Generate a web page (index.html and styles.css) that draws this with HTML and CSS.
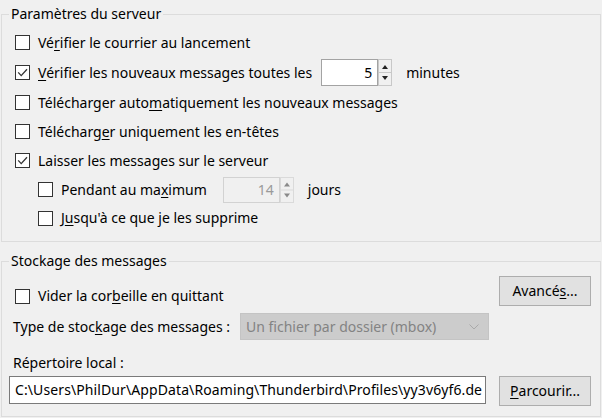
FILE: index.html
```html
<!DOCTYPE html>
<html lang="fr">
<head>
<meta charset="utf-8">
<title>Paramètres du serveur</title>
<link rel="stylesheet" href="styles.css">
</head>
<body>
<fieldset class="group group-server">
  <legend>Paramètres du serveur</legend>
  <div class="group-body">
    <div class="row">
      <span class="cb"></span>
      <span class="lbl">Vé<u>r</u>ifier le courrier au lancement</span>
    </div>
    <div class="row row-tall">
      <span class="cb"><svg viewBox="0 0 13 13" width="13" height="13"><path d="M2.2 6.4 L5.2 9.6 L11 3.2" /></svg></span>
      <span class="lbl"><u>V</u>érifier les nouveaux messages toutes les</span>
      <span class="spin spin-minutes">
        <span class="spin-field">5</span>
        <svg class="spin-btns" viewBox="0 0 14 27" width="14" height="27"><rect x="0.5" y="0.5" width="13" height="26" /><line x1="0" y1="13.5" x2="14" y2="13.5" /><polygon points="4,10 10,10 7,6" /><polygon points="4,17 10,17 7,21" /></svg>
      </span>
      <span class="unit">minutes</span>
    </div>
    <div class="row">
      <span class="cb"></span>
      <span class="lbl">Télécharger auto<u>m</u>atiquement les nouveaux messages</span>
    </div>
    <div class="row">
      <span class="cb"></span>
      <span class="lbl">Télécharg<u>e</u>r uniquement les en-têtes</span>
    </div>
    <div class="row">
      <span class="cb"><svg viewBox="0 0 13 13" width="13" height="13"><path d="M2.2 6.4 L5.2 9.6 L11 3.2" /></svg></span>
      <span class="lbl">Laisser les messages sur le serveur</span>
    </div>
    <div class="row row-sub">
      <span class="cb"></span>
      <span class="lbl">Pendant au ma<u>x</u>imum</span>
      <span class="spin spin-days disabled">
        <span class="spin-field">14</span>
        <svg class="spin-btns" viewBox="0 0 14 26" width="14" height="26"><rect x="0.5" y="0.5" width="13" height="25" /><line x1="0" y1="13" x2="14" y2="13" /><polygon points="4,9.5 10,9.5 7,5.5" /><polygon points="4,16.5 10,16.5 7,20.5" /></svg>
      </span>
      <span class="unit">jours</span>
    </div>
    <div class="row row-sub row-last">
      <span class="cb"></span>
      <span class="lbl">J<u>u</u>squ'à ce que je les supprime</span>
    </div>
  </div>
</fieldset>

<fieldset class="group group-storage">
  <legend>Stockage des messages</legend>
  <div class="group-body">
    <div class="line line-empty">
      <div class="row row-check">
        <span class="cb"></span>
        <span class="lbl">Vider la cor<u>b</u>eille en quittant</span>
      </div>
      <button class="btn" type="button">Avancé<u>s</u>...</button>
    </div>
    <div class="line line-type">
      <span class="text-lbl type-lbl">Type de stoc<u>k</u>age des messages :</span>
      <span class="select disabled">
        <span class="select-val">Un fichier par dossier (mbox)</span>
        <svg class="chevron" viewBox="0 0 10 6" width="10" height="6"><path d="M0.5 0.5 L5 5 L9.5 0.5" /></svg>
      </span>
    </div>
    <div class="line line-rep">
      <span class="text-lbl">Répertoire local :</span>
    </div>
    <div class="line line-path">
      <div class="path-field">C:\Users\PhilDur\AppData\Roaming\Thunderbird\Profiles\yy3v6yf6.de</div>
      <button class="btn" type="button"><u>P</u>arcourir...</button>
    </div>
  </div>
</fieldset>
</body>
</html>
```

FILE: styles.css
```css
html, body {
  margin: 0;
  padding: 0;
}

body {
  width: 602px;
  height: 418px;
  overflow: hidden;
  background: #f0f0f0;
  color: #000;
  font-family: "Noto Sans", "Open Sans", sans-serif;
  font-size: 14px;
  line-height: 20px;
}

u {
  text-decoration: underline;
  text-underline-offset: 2px;
}

.group {
  margin: 0 1px;
  padding: 0;
  border: 1px solid #dcdcdc;
  min-width: 0;
}

.group-server {
  margin-top: 4px;
}

.group-storage {
  margin-top: 9px;
}

.group legend {
  margin-left: 7px;
  padding: 0 2px;
  line-height: 20px;
}

.group-server .group-body {
  padding: 4px 9px 9px 7px;
}

.group-storage .group-body {
  padding: 5px 9px 11px 7px;
}

/* checkbox rows */
.row {
  display: flex;
  align-items: center;
  height: 29px;
  padding-left: 6px;
}

.row-tall {
  height: 31px;
}

.row-sub {
  padding-left: 29px;
}

.row-last {
  height: 28px;
}

.cb {
  flex: none;
  width: 13px;
  height: 13px;
  border: 1px solid #333;
  background: #fff;
  display: flex;
  align-items: center;
  justify-content: center;
}

.cb svg {
  display: block;
}

.cb path {
  fill: none;
  stroke: #333;
  stroke-width: 1.3;
}

.lbl {
  margin-left: 8px;
  white-space: nowrap;
}

/* spinners */
.spin {
  display: flex;
  flex: none;
}

.spin-minutes {
  margin-left: 9px;
}

.spin-days {
  margin-left: 16px;
}

.spin-field {
  box-sizing: border-box;
  width: 57px;
  height: 27px;
  border: 1px solid #a3a3a3;
  background: #fff;
  text-align: right;
  padding-right: 5px;
  line-height: 25px;
}

.spin-btns {
  display: block;
  flex: none;
}

.spin-btns rect {
  fill: #f0f0f0;
  stroke: #c8c8c8;
}

.spin-btns line {
  stroke: #c8c8c8;
}

.spin-btns polygon {
  fill: #222;
}

.spin.disabled .spin-field {
  height: 26px;
  line-height: 24px;
  background: #f0f0f0;
  border-color: #d2d2d2;
  color: #9a9a9a;
}

.spin.disabled .spin-btns rect,
.spin.disabled .spin-btns line {
  stroke: #dadada;
}

.spin.disabled .spin-btns polygon {
  fill: #8a8a8a;
}

.unit {
  margin-left: 14px;
  white-space: nowrap;
}

/* storage group */
.line {
  display: flex;
}

.line-empty {
  justify-content: space-between;
  align-items: flex-start;
  height: 30px;
}

.line-empty .row-check {
  height: 20px;
  margin-top: 10px;
}

.btn {
  flex: none;
  box-sizing: border-box;
  width: 92px;
  height: 30px;
  margin: 0;
  padding: 0;
  border: 1px solid #adadad;
  background: #e1e1e1;
  color: #000;
  font: inherit;
  text-align: center;
}

.text-lbl {
  padding-left: 4px;
  white-space: nowrap;
}

.line-type {
  margin-top: 7px;
  height: 27px;
  align-items: center;
}

.type-lbl {
  box-sizing: border-box;
  flex: 0 0 231px;
}

.select {
  box-sizing: border-box;
  display: flex;
  align-items: center;
  justify-content: space-between;
  width: 249px;
  height: 27px;
  padding: 0 9px 0 5px;
  border: 1px solid #c4c4c4;
  background: #cccccc;
}

.select.disabled .select-val {
  color: #838383;
  white-space: nowrap;
}

.chevron path {
  fill: none;
  stroke: #a9a9a9;
  stroke-width: 1;
}

.line-rep {
  margin-top: 13px;
  height: 20px;
  align-items: center;
}

.line-path {
  margin-top: 3px;
  height: 29px;
  justify-content: space-between;
  align-items: flex-start;
}

.path-field {
  box-sizing: border-box;
  width: 477px;
  height: 28px;
  padding: 0 4px 0 5px;
  border: 1px solid #7a7a7a;
  background: #fff;
  line-height: 26px;
  letter-spacing: 0.1px;
  white-space: nowrap;
  overflow: hidden;
}
```
